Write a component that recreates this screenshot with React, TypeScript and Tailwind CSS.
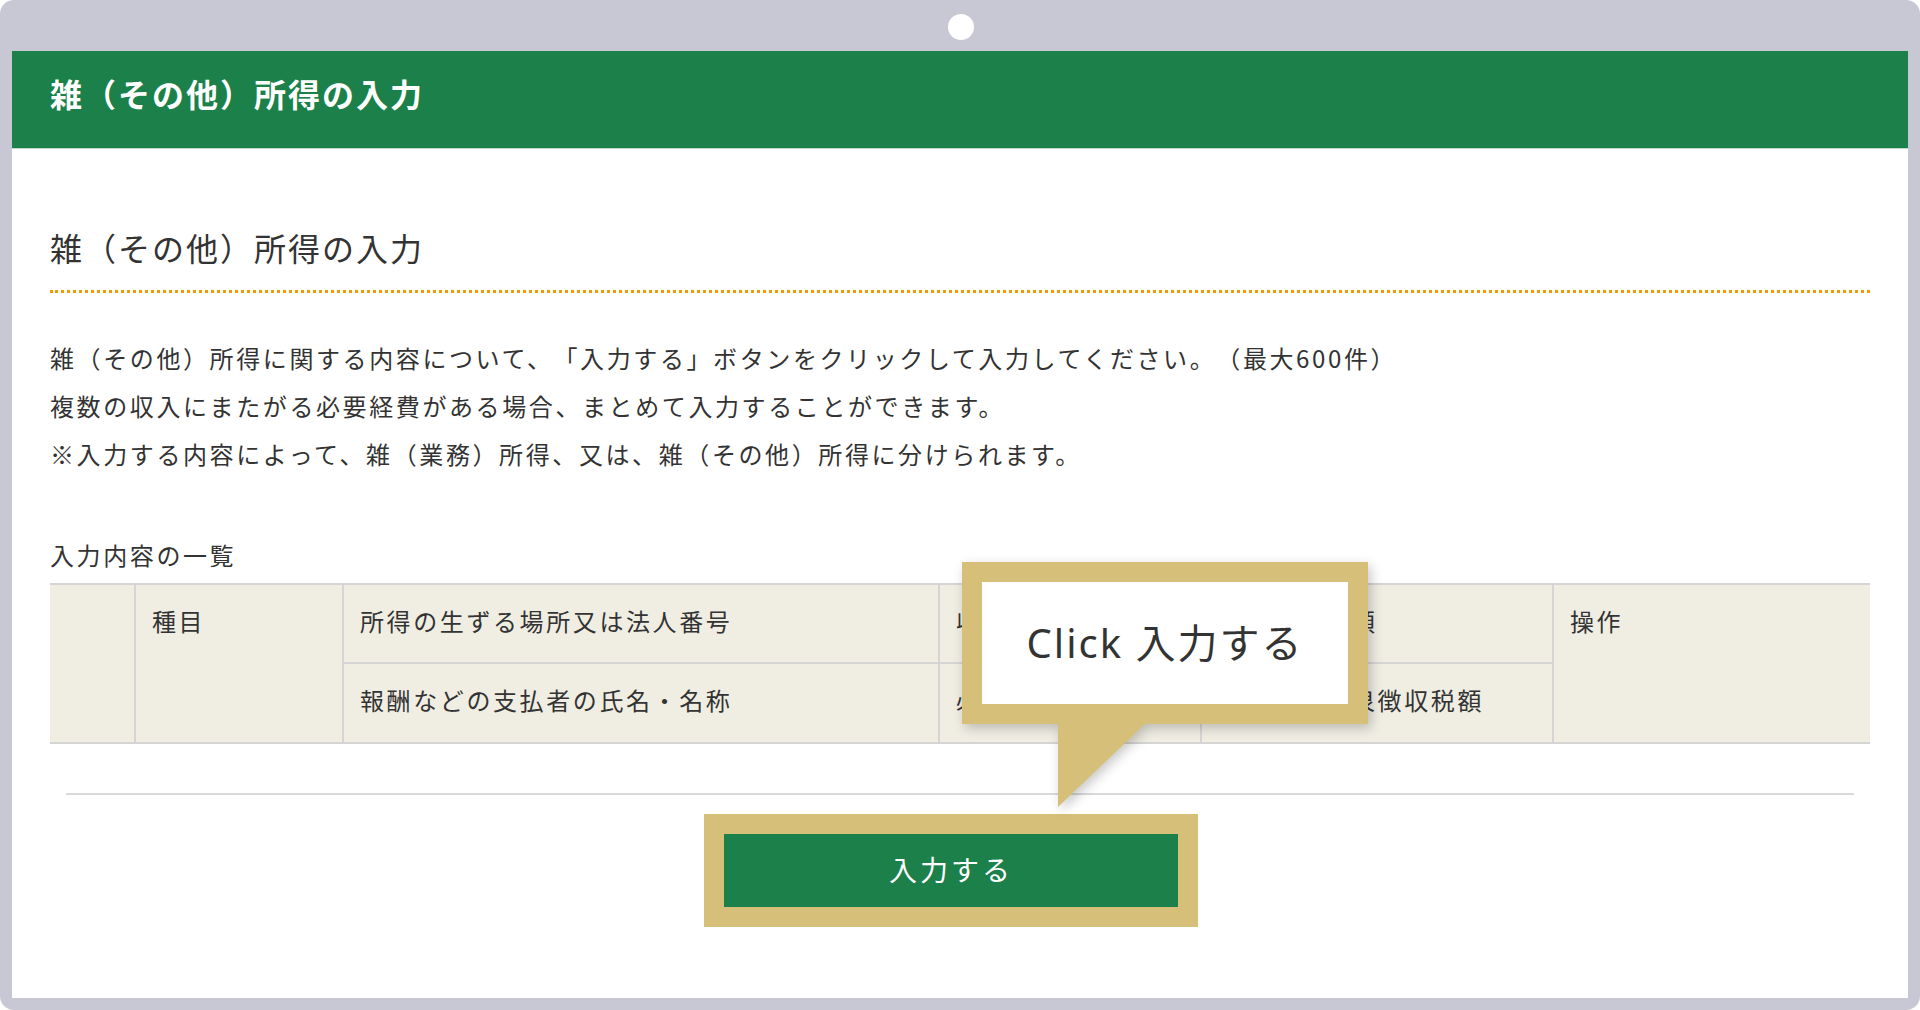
const jp = "font-['Noto_Sans_CJK_JP','Noto_Sans',sans-serif] [text-spacing-trim:space-all]";

const cell = 'align-top border-x-2 border-[#d5d5d5] pt-[18px] pl-[16px] font-normal text-left';

function InputTable() {
  return (
    <table className="w-full table-fixed border-collapse bg-[#f0eee3] text-[24px] leading-[36px] tracking-[2.6px] text-[#333]">
      <colgroup>
        <col className="w-[85px]" />
        <col className="w-[208px]" />
        <col className="w-[596px]" />
        <col className="w-[262px]" />
        <col className="w-[352px]" />
        <col />
      </colgroup>
      <tbody>
        <tr className="h-[79px] border-t-2 border-[#d5d5d5]">
          <td rowSpan={2} className="border-l-0 border-r-2 border-[#d5d5d5]" />
          <td rowSpan={2} className={cell}>種目</td>
          <td className={cell}>所得の生ずる場所又は法人番号</td>
          <td className={cell}>収入金額</td>
          <td className={cell}>源泉徴収税額</td>
          <td rowSpan={2} className="align-top border-l-2 border-[#d5d5d5] pt-[18px] pl-[16px]">操作</td>
        </tr>
        <tr className="h-[80px] border-t-2 border-b-2 border-[#d5d5d5]">
          <td className={cell}>報酬などの支払者の氏名・名称</td>
          <td className={cell}>必要経費</td>
          <td className={cell}>未納付の源泉徴収税額</td>
        </tr>
      </tbody>
    </table>
  );
}

function Callout() {
  return (
    <div className="absolute left-[950px] top-[511px] drop-shadow-[3px_4px_6px_rgba(0,0,0,0.22)]">
      <div className="relative w-[406px] h-[162px] bg-[#d6bf78] p-[20px]">
        <div className="w-full h-full bg-white flex items-center justify-center">
          <span className="font-['Noto_Sans','Noto_Sans_CJK_JP',sans-serif] text-[40px] tracking-[2px] text-[#333]">
            Click 入力する
          </span>
        </div>
        <svg
          className="absolute left-[96px] top-[161px]"
          width="88"
          height="84"
          viewBox="0 0 88 84"
        >
          <polygon points="0,0 88,0 0,84" fill="#d6bf78" />
        </svg>
      </div>
    </div>
  );
}

export default function App() {
  return (
    <div className={`w-[1920px] h-[1010px] bg-white ${jp}`}>
      <div className="relative h-full rounded-[14px] bg-[#c8c8d4] pt-[51px] px-[12px] pb-[12px]">
        <div className="absolute left-[948px] top-[14px] w-[26px] h-[26px] rounded-full bg-white" />

        <div className="relative h-full bg-white flex flex-col">
          <div className="h-[98px] shrink-0 bg-[#1b8049] px-[38px] flex items-center pb-[14px] border-b border-[#bcd8c7]">
            <h1 className="text-[32px] font-bold tracking-[2px] text-white">雑（その他）所得の入力</h1>
          </div>

          <div className="px-[38px]">
            <h2 className="mt-[74px] text-[32px] leading-[48px] tracking-[2px] text-[#333] pb-[19px] border-b-[3px] border-dotted border-[#f39800]">
              雑（その他）所得の入力
            </h2>

            <div className="mt-[41px] text-[24px] leading-[48px] tracking-[2.6px] text-[#333]">
              <p>雑（その他）所得に関する内容について、「入力する」ボタンをクリックして入力してください。（最大600件）</p>
              <p>複数の収入にまたがる必要経費がある場合、まとめて入力することができます。</p>
              <p>※入力する内容によって、雑（業務）所得、又は、雑（その他）所得に分けられます。</p>
            </div>

            <p className="mt-[59px] text-[24px] leading-[36px] tracking-[2.6px] text-[#333]">入力内容の一覧</p>

            <div className="mt-[10px]">
              <InputTable />
            </div>

            <div className="mt-[49px] mx-[16px] h-[2px] bg-[#dadada]" />

            <div className="mt-[19px] flex justify-center pr-[18px]">
              <div className="bg-[#d6bf78] p-[20px]">
                <button
                  type="button"
                  className="w-[454px] h-[73px] bg-[#1b8049] text-white text-[28px] tracking-[3px] pb-[3px]"
                >
                  入力する
                </button>
              </div>
            </div>
          </div>

          <Callout />
        </div>
      </div>
    </div>
  );
}
